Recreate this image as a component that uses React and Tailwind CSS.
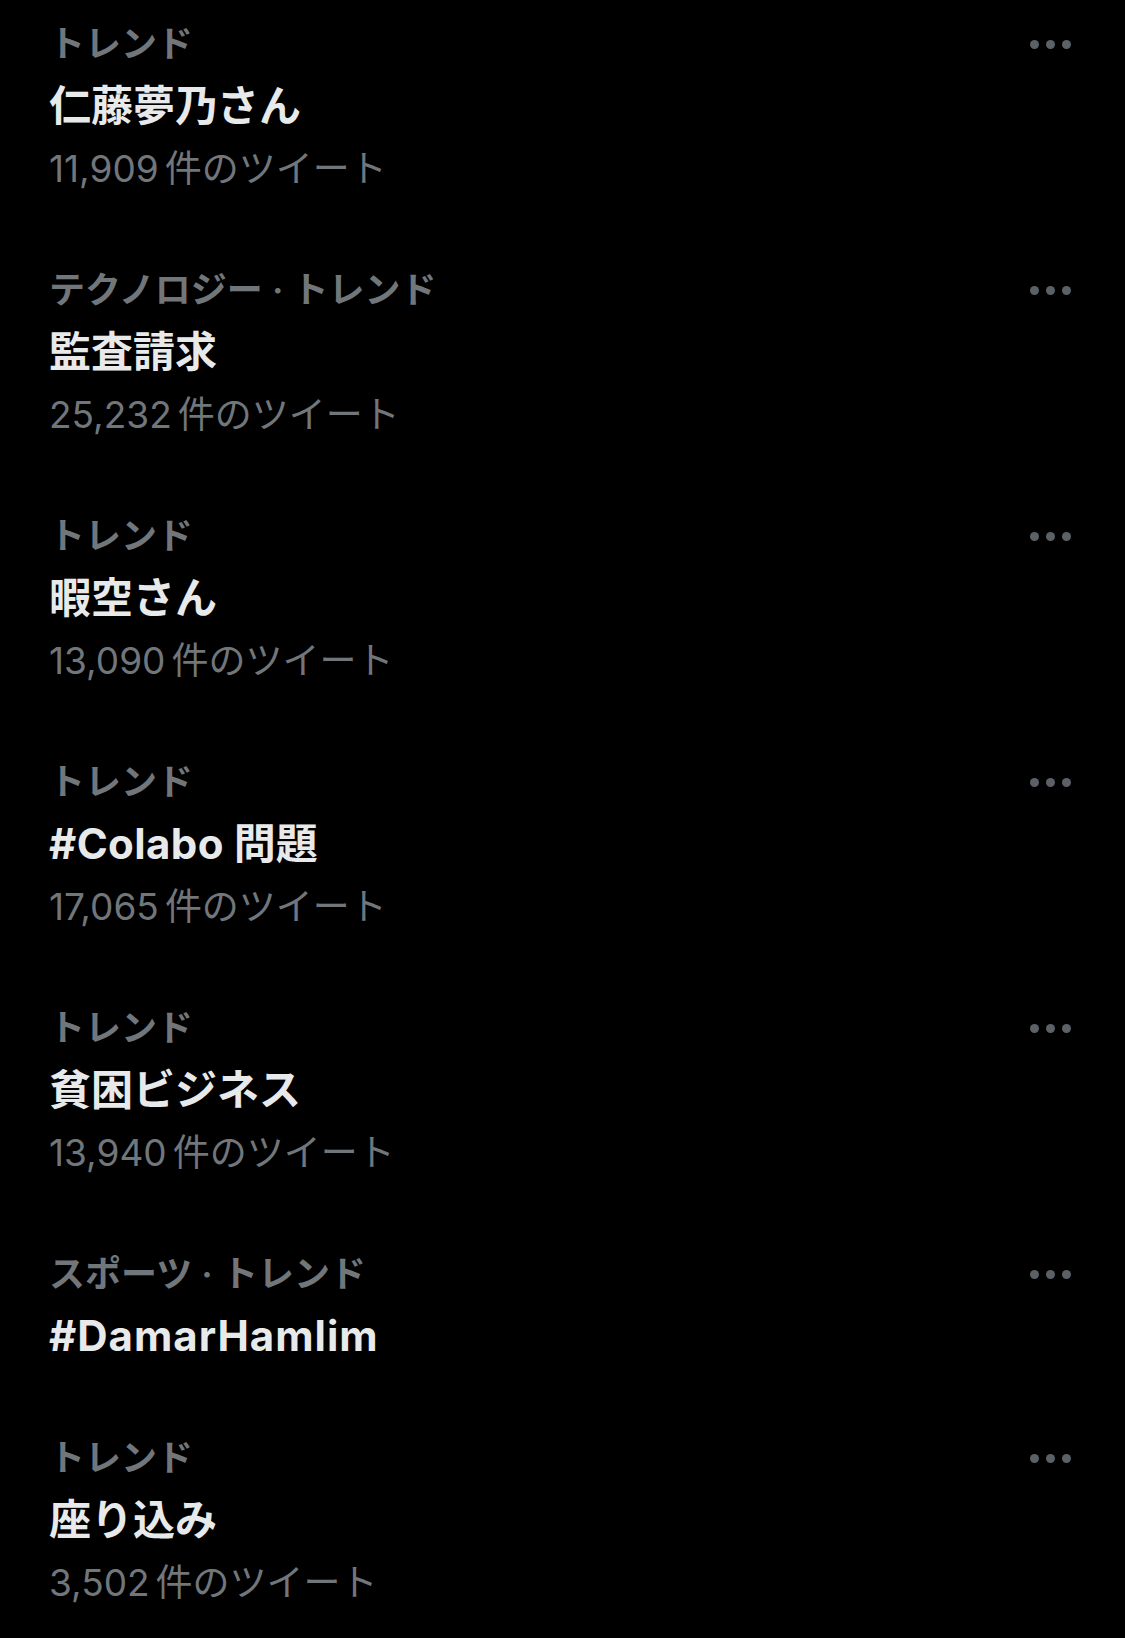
import React from "react";

const items = [
  { cat: "トレンド", title: ["仁藤夢乃さん"], count: "11,909" },
  { cat: "テクノロジー · トレンド", title: ["監査請求"], count: "25,232" },
  { cat: "トレンド", title: ["暇空さん"], count: "13,090" },
  { cat: "トレンド", title: ["#Colabo", " 問題"], count: "17,065", latin: "tracking-[0.4px]" },
  { cat: "トレンド", title: ["貧困ビジネス"], count: "13,940" },
  { cat: "スポーツ · トレンド", title: ["#DamarHamlim"], count: null, latin: "tracking-[1px]" },
  { cat: "トレンド", title: ["座り込み"], count: "3,502" },
];

function Dots() {
  return (
    <div className="self-start flex items-center gap-[7px] pt-[27px]">
      <span className="block w-[9px] h-[9px] rounded-full bg-[#5b6167]" />
      <span className="block w-[9px] h-[9px] rounded-full bg-[#5b6167]" />
      <span className="block w-[9px] h-[9px] rounded-full bg-[#5b6167]" />
    </div>
  );
}

export default function App() {
  return (
    <div
      className="w-[1125px] h-[1638px] bg-black overflow-hidden"
      style={{ fontFamily: "Inter, 'Noto Sans CJK JP', sans-serif" }}
    >
      {items.map((it, i) => (
        <div key={i} className="flex justify-between pl-[49px] pr-[54px] pt-[13px] pb-[47px]">
          <div className="flex flex-col">
            <div className="h-[62px] flex items-center text-[36px] font-semibold text-[#71767b] leading-none">
              {it.cat}
            </div>
            <div className="h-[62px] flex items-center text-[42px] font-bold text-[#e7e9ea] leading-none whitespace-pre">
              <span className={it.latin || ""}>{it.title[0]}</span>
              {it.title[1] && <span>{it.title[1]}</span>}
            </div>
            {it.count && (
              <div className="h-[62px] flex items-center text-[37px] text-[#71767b] leading-none">
                <span>{it.count}</span>
                <span className="ml-[6px]">件のツイート</span>
              </div>
            )}
          </div>
          <Dots />
        </div>
      ))}
    </div>
  );
}
